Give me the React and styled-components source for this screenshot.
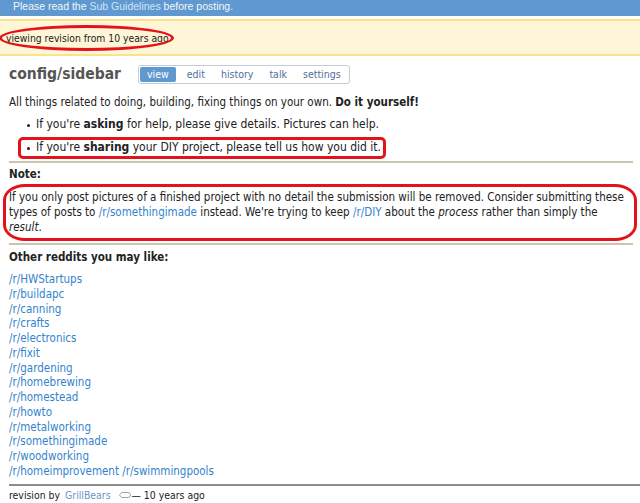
import React from "react";
import styled, { createGlobalStyle, css } from "styled-components";

const GlobalStyle = createGlobalStyle`
  html, body { margin: 0; padding: 0; background: #fff; }
  body {
    font-family: "DejaVu Sans Condensed", "DejaVu Sans", sans-serif;
    font-size: 11.5px;
    color: #222;
    overflow: hidden;
  }
`;

const redRing = css`
  position: relative;
  &::after {
    content: "";
    position: absolute;
    pointer-events: none;
    border: 3px solid #e3131b;
    box-sizing: border-box;
  }
`;

const Page = styled.div`
  width: 640px;
  height: 503px;
  overflow: hidden;
`;

const TopBar = styled.div`
  height: 16px;
  background: #5f99cf;
  color: #f2f6fb;
  padding-left: 13px;
  font-family: "Liberation Sans", Arial, sans-serif;
  font-size: 10.5px;
  line-height: 13px;
  white-space: nowrap;
`;

const BarLink = styled.a`
  color: #cee3f8;
  text-decoration: none;
`;

const Banner = styled.div`
  margin-top: 3px;
  height: 32px;
  background: #fff5d7;
  border-top: 2px solid #fbe38d;
  border-bottom: 2px solid #fbe38d;
  display: flex;
  align-items: center;
  padding: 1px 6px 0;
  box-sizing: content-box;
  font-size: 10.3px;
`;

const BannerText = styled.span`
  ${redRing}
  &::after {
    left: -7px;
    right: -5px;
    top: -7px;
    bottom: -7px;
    border-radius: 50%;
  }
`;

const Content = styled.div`
  padding: 0 7px 0 9px;
`;

const TitleRow = styled.div`
  display: flex;
  align-items: center;
  height: 20px;
  margin-top: 8px;
`;

const Title = styled.h1`
  margin: 0;
  width: 129px;
  font-size: 15.5px;
  font-weight: bold;
  color: #555;
  white-space: nowrap;
`;

const Tabs = styled.div`
  display: flex;
  align-items: center;
  height: 19px;
  box-sizing: border-box;
  border: 1px solid #c4cbd9;
  border-radius: 3px;
  padding: 0 0 0 1px;
  font-size: 10.5px;
`;

const Tab = styled.span`
  height: 15px;
  line-height: 15px;
  padding: 0 ${(p) => (p.active ? "7px" : "8px")};
  margin-right: ${(p) => (p.active ? "3px" : "0")};
  border-radius: 2px;
  color: ${(p) => (p.active ? "#fff" : "#4f6f9c")};
  background: ${(p) => (p.active ? "#5f99cf" : "transparent")};
`;

const Para = styled.p`
  margin: ${(p) => p.m || "0"};
  line-height: 15px;
`;

const Bullets = styled.ul`
  list-style: none;
  margin: 7px 0 0;
  padding: 0 0 0 16px;
  display: flex;
  flex-direction: column;
  gap: 8px;
  font-size: 12px;
`;

const Bullet = styled.li`
  display: flex;
  width: fit-content;
  line-height: 15px;
  &::before {
    content: "";
    width: 3px;
    height: 3px;
    border-radius: 50%;
    background: #222;
    margin: 7px 6px 0 2px;
    flex: none;
  }
  ${(p) =>
    p.marked &&
    css`
      ${redRing}
      &::after {
        left: -7px;
        right: -5px;
        top: -3px;
        bottom: -4px;
        border-radius: 5px;
      }
    `}
`;

const Rule = styled.hr`
  margin: ${(p) => p.m};
  border: 0;
  height: 2px;
  background: ${(p) => p.color || "#cbc5ae"};
`;

const Heading = styled.div`
  font-weight: bold;
  line-height: 15px;
  margin: ${(p) => p.m || "0"};
`;

const NoteText = styled.p`
  margin: 8px 0 0;
  line-height: 15px;
  ${redRing}
  &::after {
    left: -6px;
    right: -4px;
    top: -6px;
    bottom: -6px;
    border-radius: 22px / 16px;
  }
`;

const Link = styled.a`
  color: #3383cc;
  text-decoration: none;
`;

const LinkList = styled.div`
  margin-top: 7px;
  display: flex;
  flex-direction: column;
  line-height: 14.77px;
`;

const Footer = styled.div`
  margin-top: 2px;
  display: flex;
  align-items: center;
  line-height: 15px;
  font-size: 10.4px;
  white-space: nowrap;
`;

const Author = styled.a`
  color: #6b96c6;
  text-decoration: none;
  margin: 0 0 0 5px;
`;

const TagIcon = () => (
  <svg width="13" height="8" viewBox="0 0 13 8" style={{ margin: "0 1px 0 7px" }}>
    <path d="M1.5 4 L3.5 1.5 H10 A2.5 2.5 0 0 1 10 6.5 H3.5 Z" fill="#fff" stroke="#9aa6b8" strokeWidth="1" />
  </svg>
);

const reddits = [
  "HWStartups",
  "buildapc",
  "canning",
  "crafts",
  "electronics",
  "fixit",
  "gardening",
  "homebrewing",
  "homestead",
  "howto",
  "metalworking",
  "somethingimade",
  "woodworking",
];

export default function App() {
  return (
    <Page>
      <GlobalStyle />
      <TopBar>
        Please read the <BarLink>Sub Guidelines</BarLink> before posting.
      </TopBar>
      <Banner>
        <BannerText>viewing revision from 10 years ago</BannerText>
      </Banner>
      <Content>
        <TitleRow>
          <Title>config/sidebar</Title>
          <Tabs>
            <Tab active>view</Tab>
            <Tab>edit</Tab>
            <Tab>history</Tab>
            <Tab>talk</Tab>
            <Tab>settings</Tab>
          </Tabs>
        </TitleRow>
        <Para m="11px 0 0">
          All things related to doing, building, fixing things on your own. <b>Do it yourself!</b>
        </Para>
        <Bullets>
          <Bullet>
            <span>
              If you're <b>asking</b> for help, please give details. Pictures can help.
            </span>
          </Bullet>
          <Bullet marked>
            <span>
              If you're <b>sharing</b> your DIY project, please tell us how you did it.
            </span>
          </Bullet>
        </Bullets>
        <Rule m="6px 0 0" />
        <Heading m="4px 0 0">Note:</Heading>
        <NoteText>
          If you only post pictures of a finished project with no detail the submission will be removed. Consider
          submitting these types of posts to <Link>/r/somethingimade</Link> instead. We're trying to keep{" "}
          <Link>/r/DIY</Link> about the <i>process</i> rather than simply the <i>result</i>.
        </NoteText>
        <Rule m="8px 0 0" />
        <Heading m="5px 0 0">Other reddits you may like:</Heading>
        <LinkList>
          {reddits.map((r) => (
            <Link key={r}>/r/{r}</Link>
          ))}
          <span>
            <Link>/r/homeimprovement</Link> <Link>/r/swimmingpools</Link>
          </span>
        </LinkList>
        <Rule m="5px -7px 0 0" color="#8d8d8d" />
        <Footer>
          revision by<Author>GrillBears</Author>
          <TagIcon />— 10 years ago
        </Footer>
      </Content>
    </Page>
  );
}
